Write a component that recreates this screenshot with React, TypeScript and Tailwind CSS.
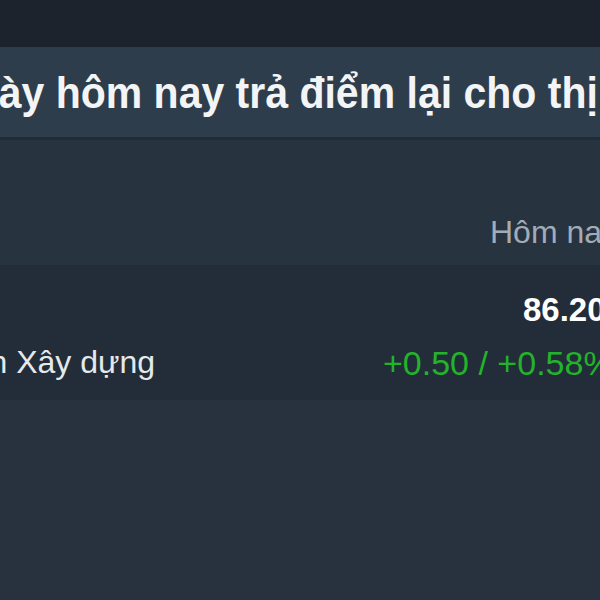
import React from 'react';

const font = "font-['Liberation_Sans',Arial,sans-serif]";

const App: React.FC = () => {
  return (
    <div className={`w-[600px] h-[600px] overflow-hidden bg-[#28323e] ${font}`}>
      {/* top bar */}
      <div className="h-[47px] bg-[#1c232d]" />

      {/* headline banner */}
      <div className="h-[90px] bg-[#2e3d4c] flex items-center overflow-hidden">
        <p className="whitespace-nowrap ml-[-56px] text-[41px] leading-none font-bold text-[#f2f4f6] pt-[2px] scale-y-110 origin-left">
          Ngày hôm nay trả điểm lại cho thị trường
        </p>
      </div>
      <div className="h-[3px] bg-[#222c38]" />

      {/* table header */}
      <div className="h-[125px] bg-[#283340] flex items-end pb-[17px]">
        <span className="ml-[490px] whitespace-nowrap text-[32px] leading-none text-[#a2acb6]">Hôm nay</span>
      </div>

      {/* table row */}
      <div className="h-[135px] bg-[#232d39] flex items-end pb-[20px] overflow-hidden">
        <span className="whitespace-nowrap ml-[-55px] mb-[2px] text-[32px] leading-none text-[#e6e9ec]">triển Xây dựng</span>
        <div className="ml-auto flex flex-col items-start whitespace-nowrap w-[217px] shrink-0">
          <span className="ml-[140px] text-[33px] leading-none font-bold text-white mb-[20px]">86.200</span>
          <span className="text-[34px] leading-none text-[#22b32b]">+0.50 / +0.58%</span>
        </div>
      </div>

      <div className="flex-1 bg-[#28323e]" />
    </div>
  );
};

export default App;
